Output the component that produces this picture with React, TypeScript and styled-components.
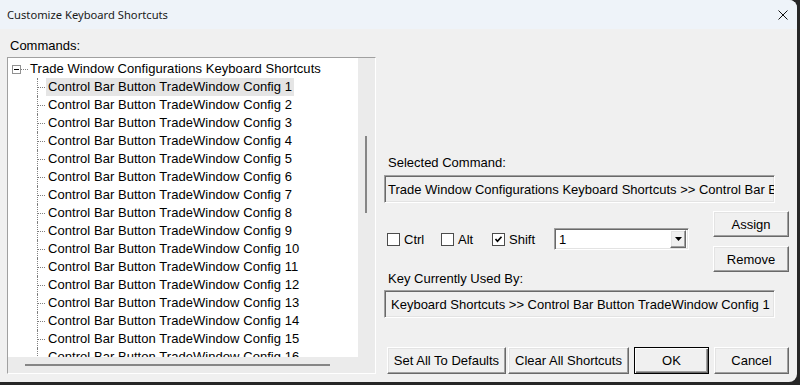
import React from "react";
import styled, { createGlobalStyle, css } from "styled-components";

const GlobalStyle = createGlobalStyle`
  html, body { margin: 0; padding: 0; background: #262626; }
  body { width: 800px; height: 385px; overflow: hidden; }
  #root { width: 800px; height: 385px; }
`;

const Window = styled.div`
  width: 797px;
  height: 382px;
  background: #f0f0f0;
  border-radius: 0 8px 8px 0;
  overflow: hidden;
  display: flex;
  flex-direction: column;
  font-family: "Liberation Sans", Arial, sans-serif;
  font-size: 13px;
  color: #000;
`;

const TitleBar = styled.div`
  height: 29px;
  flex: none;
  background: #eef3f9;
  display: flex;
  align-items: center;
  justify-content: space-between;
  padding: 0 9px 0 7px;
`;

const Title = styled.span`
  font-family: "Noto Sans", "Segoe UI", sans-serif;
  font-size: 11.2px;
  color: #1a1a1a;
`;

const CloseIcon = styled.svg`
  width: 10px;
  height: 10px;
  display: block;
`;

const Body = styled.div`
  flex: 1;
  min-height: 0;
  display: flex;
  gap: 8px;
  padding: 9px 8px 8px 7px;
`;

const LeftColumn = styled.div`
  width: 369px;
  flex: none;
  display: flex;
  flex-direction: column;
`;

const FieldLabel = styled.div<{ $indent: number; $below: number; $above?: number }>`
  line-height: 15px;
  height: 15px;
  margin-left: ${(p) => p.$indent}px;
  margin-bottom: ${(p) => p.$below}px;
  margin-top: ${(p) => p.$above ?? 0}px;
  white-space: nowrap;
`;

const TreeFrame = styled.div`
  flex: 1;
  display: grid;
  grid-template-columns: 350px 17px;
  grid-template-rows: 299px 16px;
  border: 1px solid;
  border-color: #a0a0a0 #ffffff #ffffff #a0a0a0;
`;

const TreeList = styled.div`
  background: #fff;
  overflow: hidden;
  padding-top: 2px;
`;

const TreeRow = styled.div`
  display: flex;
  align-items: center;
  height: 18px;
  white-space: nowrap;
`;

const ExpandBox = styled.svg`
  width: 9px;
  height: 9px;
  margin-left: 4px;
  flex: none;
  display: block;
`;

const dottedHorizontal = css`
  background-image: linear-gradient(to right, #808080 50%, transparent 50%);
  background-size: 2px 1px;
  background-repeat: repeat-x;
  background-position: 0 9px;
`;

const RootStub = styled.span`
  width: 7px;
  height: 18px;
  flex: none;
  ${dottedHorizontal}
`;

const Connector = styled.span`
  margin-left: 29px;
  width: 8px;
  height: 18px;
  flex: none;
  border-left: 1px dotted #808080;
  ${dottedHorizontal}
`;

const ItemLabel = styled.span<{ $selected?: boolean }>`
  padding: 0 2px;
  height: 18px;
  line-height: 18px;
  letter-spacing: 0.05px;
  background: ${(p) => (p.$selected ? "#e5e5e5" : "transparent")};
`;

const VTrack = styled.div`
  background: #ebebeb;
  display: flex;
  flex-direction: column;
`;

const VThumb = styled.div`
  width: 2px;
  height: 77px;
  margin: 78px 0 0 7px;
  background: #868686;
`;

const HTrack = styled.div`
  background: #ebebeb;
  display: flex;
`;

const HThumb = styled.div`
  width: 305px;
  height: 2px;
  margin: 7px 0 0 17px;
  background: #868686;
`;

const Corner = styled.div`
  background: #ebebeb;
`;

const RightColumn = styled.div`
  flex: 1;
  display: flex;
  flex-direction: column;
  justify-content: flex-end;
`;

const sunken = css`
  border: 1px solid;
  border-color: #a0a0a0 #ffffff #ffffff #a0a0a0;
  box-shadow: inset 1px 1px 0 #696969, inset -1px -1px 0 #e3e3e3;
`;

const TextBox = styled.div<{ $inset: number }>`
  width: 391px;
  height: 28px;
  box-sizing: border-box;
  ${sunken}
  background: #f0f0f0;
  display: flex;
  align-items: center;
  overflow: hidden;
  padding: 0 3px 0 ${(p) => p.$inset}px;
  white-space: nowrap;
`;

const TextValue = styled.span`
  flex: none;
  line-height: 15px;
`;

const ControlRow = styled.div`
  height: 61px;
  display: flex;
  justify-content: space-between;
  align-items: flex-start;
  margin-top: 8px;
`;

const CheckGroup = styled.div`
  margin-top: 17px;
  height: 22px;
  padding-left: 3px;
  display: flex;
  align-items: center;
`;

const CheckItem = styled.label<{ $width: number }>`
  width: ${(p) => p.$width}px;
  display: flex;
  align-items: center;
  gap: 4px;
  line-height: 15px;
`;

const CheckBox = styled.span`
  width: 13px;
  height: 13px;
  box-sizing: border-box;
  border: 1px solid #4c4c4c;
  background: #fff;
  display: flex;
  align-items: center;
  justify-content: center;
  flex: none;
`;

const Combo = styled.div`
  width: 135px;
  height: 22px;
  box-sizing: border-box;
  ${sunken}
  background: #fff;
  display: flex;
  align-items: center;
  justify-content: space-between;
  padding: 2px 2px 2px 4px;
`;

const raised = css`
  background: #f0f0f0;
  border: 1px solid;
  border-color: #ffffff #696969 #696969 #ffffff;
  box-shadow: inset -1px -1px 0 #a0a0a0, inset 1px 1px 0 #e3e3e3;
`;

const DropButton = styled.div`
  width: 16px;
  height: 18px;
  box-sizing: border-box;
  ${raised}
  display: flex;
  align-items: center;
  justify-content: center;
`;

const ButtonStack = styled.div`
  width: 76px;
  display: flex;
  flex-direction: column;
  gap: 9px;
`;

const Button = styled.button<{ $width?: number; $height?: number; $primary?: boolean }>`
  width: ${(p) => (p.$width ? `${p.$width}px` : "100%")};
  height: ${(p) => p.$height ?? 26}px;
  box-sizing: border-box;
  padding: 0;
  font-family: "Liberation Sans", Arial, sans-serif;
  font-size: 13px;
  color: #000;
  ${raised}
  ${(p) =>
    p.$primary &&
    css`
      border-color: #000;
      box-shadow: inset 1px 1px 0 #fff, inset -1px -1px 0 #696969, inset -2px -2px 0 #a0a0a0;
    `}
`;

const BottomBar = styled.div`
  display: flex;
  padding-left: 3px;
  margin-top: 29px;
`;

const BarSpacer = styled.span<{ $w: number }>`
  width: ${(p) => p.$w}px;
  flex: none;
`;

const items = Array.from({ length: 16 }, (_, i) => `Control Bar Button TradeWindow Config ${i + 1}`);

export default function App() {
  return (
    <>
      <GlobalStyle />
      <Window>
        <TitleBar>
          <Title>Customize Keyboard Shortcuts</Title>
          <CloseIcon viewBox="0 0 10 10">
            <path d="M0.5 0.5 L9.5 9.5 M9.5 0.5 L0.5 9.5" stroke="#111" strokeWidth="1" fill="none" />
          </CloseIcon>
        </TitleBar>
        <Body>
          <LeftColumn>
            <FieldLabel $indent={3} $below={4}>Commands:</FieldLabel>
            <TreeFrame>
              <TreeList>
                <TreeRow>
                  <ExpandBox viewBox="0 0 9 9">
                    <rect x="0.5" y="0.5" width="8" height="8" fill="#fff" stroke="#919191" />
                    <path d="M2 4.5 H7" stroke="#000" strokeWidth="1" />
                  </ExpandBox>
                  <RootStub />
                  <ItemLabel>Trade Window Configurations Keyboard Shortcuts</ItemLabel>
                </TreeRow>
                {items.map((t, i) => (
                  <TreeRow key={t}>
                    <Connector />
                    <ItemLabel $selected={i === 0}>{t}</ItemLabel>
                  </TreeRow>
                ))}
              </TreeList>
              <VTrack>
                <VThumb />
              </VTrack>
              <HTrack>
                <HThumb />
              </HTrack>
              <Corner />
            </TreeFrame>
          </LeftColumn>
          <RightColumn>
            <FieldLabel $indent={4} $below={5}>Selected Command:</FieldLabel>
            <TextBox $inset={3}>
              <TextValue>Trade Window Configurations Keyboard Shortcuts &gt;&gt; Control Bar Button TradeWindow Config 1</TextValue>
            </TextBox>
            <ControlRow>
              <CheckGroup>
                <CheckItem $width={54}>
                  <CheckBox />
                  Ctrl
                </CheckItem>
                <CheckItem $width={51}>
                  <CheckBox />
                  Alt
                </CheckItem>
                <CheckItem $width={62}>
                  <CheckBox>
                    <svg width="9" height="9" viewBox="0 0 9 9">
                      <polyline points="1.5,4 3.5,6.2 7.5,1.8" fill="none" stroke="#000" strokeWidth="1.7" />
                    </svg>
                  </CheckBox>
                  Shift
                </CheckItem>
                <Combo>
                  <TextValue>1</TextValue>
                  <DropButton>
                    <svg width="7" height="4" viewBox="0 0 7 4">
                      <polygon points="0,0 7,0 3.5,4" fill="#000" />
                    </svg>
                  </DropButton>
                </Combo>
              </CheckGroup>
              <ButtonStack>
                <Button>Assign</Button>
                <Button>Remove</Button>
              </ButtonStack>
            </ControlRow>
            <FieldLabel $indent={4} $below={4} $above={-1}>Key Currently Used By:</FieldLabel>
            <TextBox $inset={6}>
              <TextValue>Keyboard Shortcuts &gt;&gt; Control Bar Button TradeWindow Config 1</TextValue>
            </TextBox>
            <BottomBar>
              <Button $width={119} $height={27}>Set All To Defaults</Button>
              <BarSpacer $w={2} />
              <Button $width={121} $height={27}>Clear All Shortcuts</Button>
              <BarSpacer $w={5} />
              <Button $width={75} $height={27} $primary>OK</Button>
              <BarSpacer $w={5} />
              <Button $width={75} $height={27}>Cancel</Button>
            </BottomBar>
          </RightColumn>
        </Body>
      </Window>
    </>
  );
}
